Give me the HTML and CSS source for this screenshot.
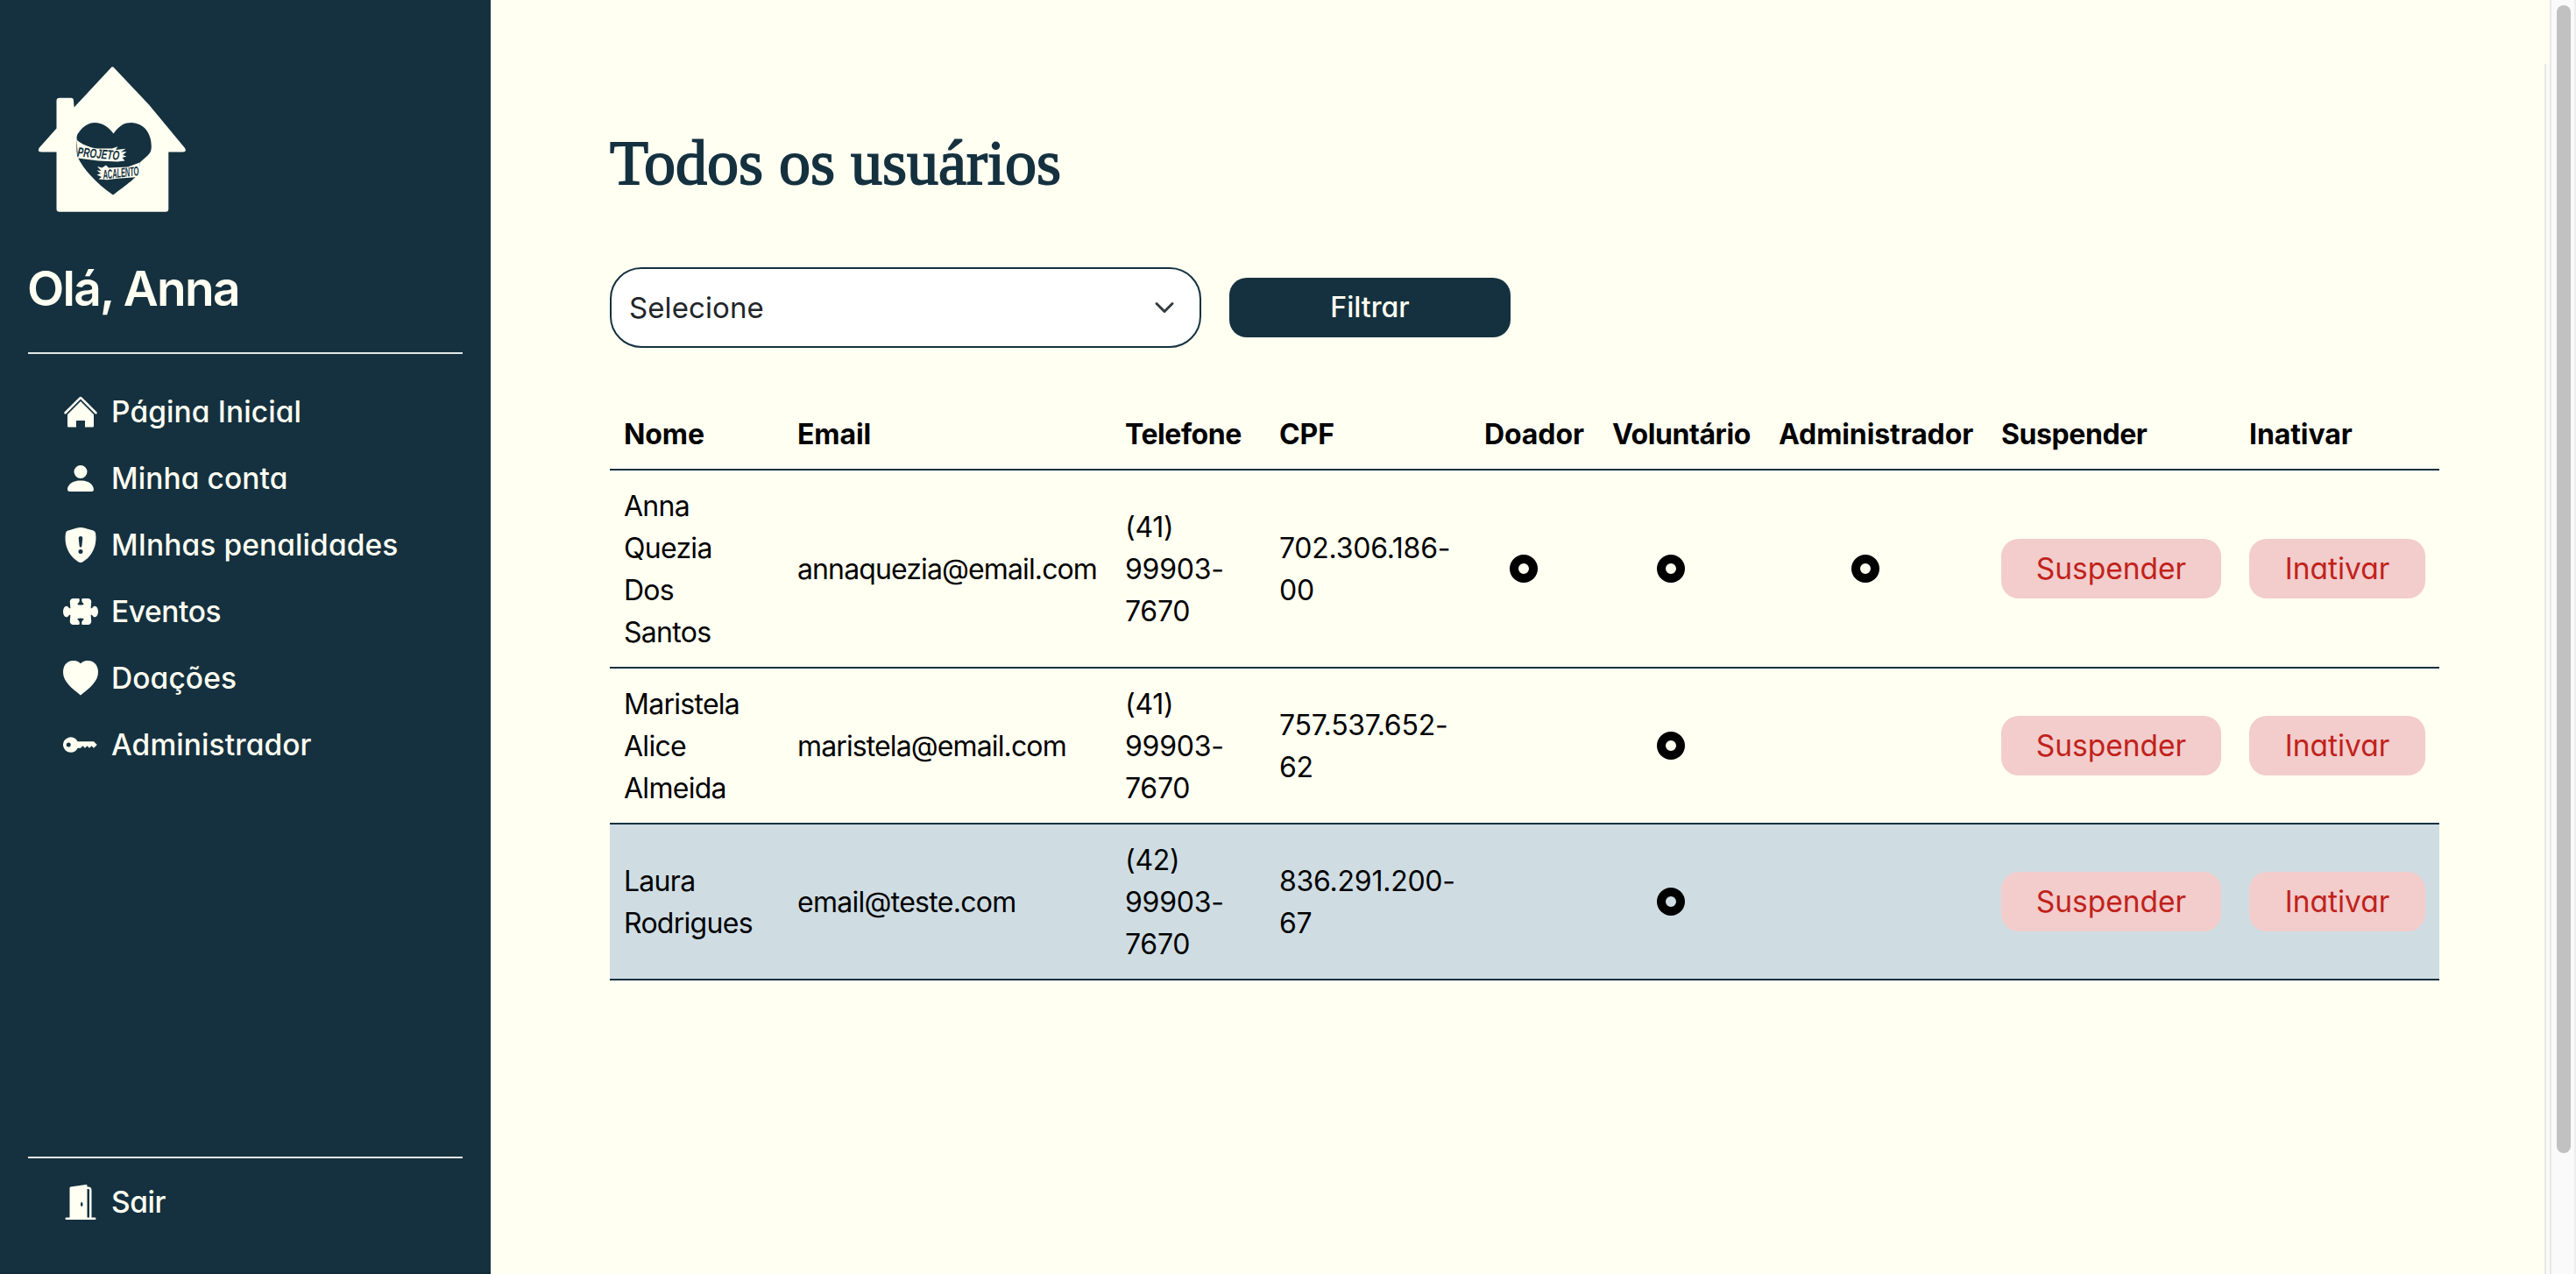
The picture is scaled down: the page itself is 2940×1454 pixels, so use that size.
FILE: index.html
```
<!DOCTYPE html>
<html lang="pt-BR">
<head>
<meta charset="utf-8">
<title>Todos os usuários</title>
<link rel="stylesheet" href="styles.css">
</head>
<body>
<div class="app">
  <aside class="sidebar">
    <svg class="logo" viewBox="32 60 192 192" aria-label="Projeto Acalento">
      <path class="logo-house" d="M126.500 77.500Q128.300 75 130.300 77.500L170 119.500 211 169Q213.500 173 209 173.500H192.300V238.500Q192.300 241.700 189 241.700H68Q64.500 241.700 64.500 238.500V173.500H48Q42 173.500 44.500 169L64.500 146.500V115Q64.500 111.700 68 111.700H81Q84 111.700 84 115L84.600 122.500Z"/>
      <path class="logo-heart" d="M129.500 152.500C137 142.500 142 140 150 140C164 140.500 173 152 172.800 167C172.800 173 171 175 168 178L159.500 185.500 158.500 196C157.500 201 150 207 129 222.500C108 208 95 192 89 180C87 176 87.300 164 87.800 159.500C87.300 157 87.300 154 90 151C95 144 101 140 108 140C117 140 124 145 129.500 152.500Z"/>
      <path class="logo-sleeve" d="M87.500 159.500C92 164 102 168.500 111 169.500H128L134.500 167.200 132 171 143.500 169.800 138 173.500 144.500 173 140 177 144.500 178.500 139.500 180 142.500 183.500 134 184.500 112 183.500 89 180.500Z"/>
      <path class="logo-sleeve" d="M111 190L116.500 191.500 121 188.500 124 191.500 146 190.500 159.500 185.500 158 202 134 203.700 122 205.300 112.500 204.500 116 202 110.500 199.500 115 198 110.500 194.500 115.500 195Z"/>
      <text class="logo-text" transform="translate(88 178.500) rotate(5)" textLength="48" lengthAdjust="spacingAndGlyphs">PROJETO</text>
      <text class="logo-text" transform="translate(118 204.500) rotate(-6)" textLength="41" lengthAdjust="spacingAndGlyphs">ACALENTO</text>
    </svg>
    <h2 class="greeting">Olá, Anna</h2>
    <hr class="rule">
    <nav class="menu">
      <a class="item"><svg class="icon" viewBox="0 0 16 16"><path d="M7.293 1.500a1 1 0 0 1 1.414 0l6.647 6.646a.5.5 0 0 1-.708.708L8 2.207 1.354 8.854a.5.5 0 1 1-.708-.708z"/><path d="M8 3.200l6 6v5.300a.5.5 0 0 1-.5.5H10v-3H6v3H2.500a.5.5 0 0 1-.5-.5V9.200z"/></svg><span>Página Inicial</span></a>
      <a class="item"><svg class="icon" viewBox="0 0 16 16"><path d="M3 14s-1 0-1-1 1-4 6-4 6 3 6 4-1 1-1 1zm5-6a3 3 0 1 0 0-6 3 3 0 0 0 0 6"/></svg><span>Minha conta</span></a>
      <a class="item"><svg class="icon" viewBox="0 0 16 16"><path d="M8 0c-.69 0-1.843.265-2.928.56-1.110.3-2.229.655-2.887.87a1.540 1.540 0 0 0-1.044 1.262c-.596 4.477.787 7.795 2.465 9.990a11.777 11.777 0 0 0 2.517 2.453c.386.273.744.482 1.048.625.28.132.581.24.829.24s.548-.108.829-.24a7.159 7.159 0 0 0 1.048-.625 11.775 11.775 0 0 0 2.517-2.453c1.678-2.195 3.061-5.513 2.465-9.990a1.541 1.541 0 0 0-1.044-1.263 62.467 62.467 0 0 0-2.887-.87C9.843.266 8.690 0 8 0m-.55 8.502L7.100 4.995a.905.905 0 1 1 1.800 0l-.35 3.507a.552.552 0 0 1-1.100 0M8.002 12a1 1 0 1 1 0-2 1 1 0 0 1 0 2"/></svg><span>MInhas penalidades</span></a>
      <a class="item item-snug"><svg class="icon" viewBox="0 0 16 16"><path d="M3.112 3.645A1.500 1.500 0 0 1 4.605 2H7a.5.5 0 0 1 .5.5v.382c0 .696-.497 1.182-.872 1.469a.459.459 0 0 0-.115.118l-.012.025L6.500 4.500v.003l.003.010c.004.010.014.028.036.053a.86.86 0 0 0 .27.194C7.090 4.900 7.510 5 8 5c.492 0 .912-.1 1.190-.24a.86.86 0 0 0 .271-.194.213.213 0 0 0 .039-.063v-.009l-.012-.025a.459.459 0 0 0-.115-.118c-.375-.287-.872-.773-.872-1.469V2.500A.5.5 0 0 1 9 2h2.395a1.500 1.500 0 0 1 1.493 1.645L12.645 6.500h.237c.195 0 .42-.147.675-.48.21-.274.528-.52.943-.52.568 0 .947.447 1.154.862C15.877 6.807 16 7.387 16 8s-.123 1.193-.346 1.638c-.207.415-.586.862-1.154.862-.415 0-.733-.246-.943-.52-.255-.333-.48-.48-.675-.48h-.237l.243 2.855A1.500 1.500 0 0 1 11.395 14H9a.5.5 0 0 1-.5-.5v-.382c0-.696.497-1.182.872-1.469a.459.459 0 0 0 .115-.118l.012-.025L9.500 11.500v-.003a.214.214 0 0 0-.039-.064.859.859 0 0 0-.27-.193C8.910 11.100 8.490 11 8 11c-.491 0-.912.1-1.190.24a.859.859 0 0 0-.271.194.214.214 0 0 0-.039.063v.003l.001.006.012.025c.016.027.050.068.115.118.375.287.872.773.872 1.469v.382a.5.5 0 0 1-.5.5H4.605a1.500 1.500 0 0 1-1.493-1.645L3.356 9.500h-.238c-.195 0-.42.147-.675.48-.21.274-.528.52-.943.52-.568 0-.947-.447-1.154-.862C.123 9.193 0 8.613 0 8s.123-1.193.346-1.638C.553 5.947.932 5.500 1.500 5.500c.415 0 .733.246.943.520.255.333.48.48.675.48h.238z"/></svg><span>Eventos</span></a>
      <a class="item"><svg class="icon" viewBox="0 0 16 16"><path d="M8 1.300C9.200.2 10.300 0 11.500 0 14.300 0 16 2.400 16 5.200c0 4.300-3.700 7.200-8 10.600C3.700 12.400 0 9.500 0 5.200 0 2.400 1.700 0 4.500 0 5.700 0 6.800.2 8 1.300z"/></svg><span>Doações</span></a>
      <a class="item"><svg class="icon" viewBox="0 0 16 16"><path d="M3.500 11.500a3.500 3.500 0 1 1 3.163-5H14L15.500 8 14 9.500l-1-1-1 1-1-1-1 1-1-1-1 1H6.663a3.500 3.500 0 0 1-3.163 2M2.500 9a1 1 0 1 0 0-2 1 1 0 0 0 0 2"/></svg><span>Administrador</span></a>
    </nav>
    <div class="exit">
      <hr class="rule">
      <a class="item item-snug"><svg class="icon" viewBox="0 0 16 16"><path d="M1.500 15a.5.5 0 0 0 0 1h13a.5.5 0 0 0 0-1H13V2.500A1.500 1.500 0 0 0 11.500 1H11V.5a.5.5 0 0 0-.57-.495l-7 1A.5.5 0 0 0 3 1.500V15zM11 2h.5a.5.5 0 0 1 .5.5V15h-1zm-2.500 8c-.276 0-.5-.448-.5-1s.224-1 .5-1 .5.448.5 1-.224 1-.5 1"/></svg><span>Sair</span></a>
    </div>
  </aside>

  <main class="content">
    <h1 class="title">Todos os usuários</h1>
    <div class="filters">
      <div class="select"><span>Selecione</span><svg class="chevron" viewBox="0 0 16 16"><path d="M2 5l6 6 6-6"/></svg></div>
      <button class="btn btn-filter">Filtrar</button>
    </div>
    <table class="users">
      <colgroup><col class="c-name"><col class="c-email"><col class="c-phone"><col class="c-cpf"><col class="c-donor"><col class="c-vol"><col class="c-adm"><col class="c-susp"><col class="c-inact"></colgroup>
      <thead>
        <tr><th>Nome</th><th>Email</th><th class="tight">Telefone</th><th>CPF</th><th>Doador</th><th class="tight">Voluntário</th><th>Administrador</th><th class="tight">Suspender</th><th>Inativar</th></tr>
      </thead>
      <tbody>
        <tr>
          <td>Anna<br>Quezia<br>Dos<br>Santos</td><td class="email">annaquezia@email.com</td><td class="num">(41) 99903-7670</td><td class="num">702.306.186-00</td>
          <td class="mark"><i class="dot"></i></td><td class="mark"><i class="dot"></i></td><td class="mark"><i class="dot"></i></td>
          <td class="action"><button class="btn btn-danger">Suspender</button></td><td class="action"><button class="btn btn-danger">Inativar</button></td>
        </tr>
        <tr>
          <td>Maristela<br>Alice<br>Almeida</td><td class="email">maristela@email.com</td><td class="num">(41) 99903-7670</td><td class="num">757.537.652-62</td>
          <td class="mark"></td><td class="mark"><i class="dot"></i></td><td class="mark"></td>
          <td class="action"><button class="btn btn-danger">Suspender</button></td><td class="action"><button class="btn btn-danger">Inativar</button></td>
        </tr>
        <tr class="active">
          <td>Laura<br>Rodrigues</td><td>email@teste.com</td><td class="num">(42) 99903-7670</td><td class="num">836.291.200-67</td>
          <td class="mark"></td><td class="mark"><i class="dot"></i></td><td class="mark"></td>
          <td class="action"><button class="btn btn-danger">Suspender</button></td><td class="action"><button class="btn btn-danger">Inativar</button></td>
        </tr>
      </tbody>
    </table>
  </main>

  <div class="inner-track"></div>
  <div class="track"><div class="thumb"></div></div>
</div>
</body>
</html>
```
FILE: styles.css
```
* { box-sizing: border-box; }

body {
  margin: 0;
  background: #fffff2;
  color: #000;
  font-family: Inter, "Liberation Sans", sans-serif;
  font-size: 32px;
  line-height: 48px;
}

.app {
  display: grid;
  grid-template-columns: 560px 1fr 6px 30px;
  height: 1454px;
  overflow: hidden;
}

/* Sidebar */
.sidebar {
  display: flex;
  flex-direction: column;
  padding: 60px 32px 42px;
  background: #15313f;
  color: #fffff2;
  border-bottom: 2px solid #122a37;
}

.logo { display: block; width: 192px; height: 192px; }
.logo-house, .logo-sleeve { fill: #fffff2; }
.logo-heart { fill: #15313f; }
.logo-text { font: italic bold 15px "Liberation Sans", sans-serif; fill: #15313f; }

.greeting {
  margin: 44px 0 40px -1px;
  font-size: 55px;
  line-height: 66px;
  font-weight: 600;
  letter-spacing: -1.74px;
}

.rule {
  width: 100%;
  height: 2px;
  margin: 0;
  border: 0;
  background: #e3e7e6;
}

.menu { margin-top: 28px; }
.exit { margin-top: auto; }
.exit .item { margin-top: 12px; }

.item {
  display: flex;
  align-items: center;
  gap: 15px;
  height: 76px;
  padding-left: 40px;
  font-size: 33.5px;
  font-weight: 500;
  letter-spacing: .1px;
  font-feature-settings: "cv11";
}
.item-snug { letter-spacing: -.4px; }

.icon { flex: none; width: 40px; height: 40px; fill: currentColor; }

/* Content */
.content { padding: 143px 0 0 136px; }

.title {
  margin: 0 0 76px;
  font-family: "Liberation Serif", serif;
  font-size: 72px;
  line-height: 86px;
  font-weight: 400;
  color: #15313f;
  -webkit-text-stroke: 1.8px #15313f;
}

.filters {
  display: flex;
  align-items: center;
  gap: 32px;
  height: 92px;
  margin-bottom: 58px;
}

.select {
  display: flex;
  align-items: center;
  justify-content: space-between;
  width: 675px;
  height: 92px;
  padding: 0 28px 0 20px;
  border: 2px solid #15313f;
  border-radius: 36px;
  background: #fff;
  color: #212529;
  font-size: 33px;
  letter-spacing: .1px;
}

.chevron {
  width: 24px;
  height: 24px;
  fill: none;
  stroke: #343a40;
  stroke-width: 2;
  stroke-linecap: round;
  stroke-linejoin: round;
}

.btn {
  display: block;
  height: 68px;
  padding: 0;
  border: 0;
  border-radius: 20px;
  font: inherit;
  text-align: center;
  font-feature-settings: "cv11";
}

.btn-filter {
  width: 321px;
  background: #15313f;
  color: #fffff2;
  font-weight: 500;
  letter-spacing: 0;
}

.btn-danger {
  width: 100%;
  background: #f3cccc;
  color: #c0221b;
  font-size: 33.5px;
  letter-spacing: 0;
}

/* Users table */
.users {
  width: 2088px;
  table-layout: fixed;
  border-collapse: separate;
  border-spacing: 0;
}

.c-name { width: 198px; }
.c-email { width: 374px; }
.c-phone { width: 176px; }
.c-cpf { width: 234px; }
.c-donor { width: 146px; }
.c-vol { width: 190px; }
.c-adm { width: 254px; }
.c-susp { width: 283px; }
.c-inact { width: 233px; }

.users th, .users td {
  padding: 17px 16px 15px;
  border-bottom: 2px solid #15313f;
  text-align: left;
  vertical-align: middle;
}
.users th { font-weight: 700; letter-spacing: -.1px; }
.users th.tight { letter-spacing: -.42px; }
.users td { letter-spacing: -.72px; }
.users td.email { letter-spacing: -.88px; }
.users td.num { letter-spacing: -.25px; }
.users td.mark { padding: 16px 41px 16px 16px; text-align: center; }
.users td.action { padding: 16px; }
.active { background: #cfdde3; }

.dot {
  display: block;
  width: 32px;
  height: 32px;
  margin: 0 auto;
  border: 10px solid #000;
  border-radius: 50%;
}

/* Scrollbars */
.inner-track {
  margin-top: 73px;
  background: #fafafa;
  border-left: 2px solid #e8e8e8;
}

.track {
  padding: 6px 4px 0 6px;
  background: #fafafa;
  border-left: 2px solid #e8e8e8;
  border-right: 2px solid #ededed;
}

.thumb {
  width: 16px;
  height: 1310px;
  border-radius: 8px;
  background: #c1c1c1;
}
```
